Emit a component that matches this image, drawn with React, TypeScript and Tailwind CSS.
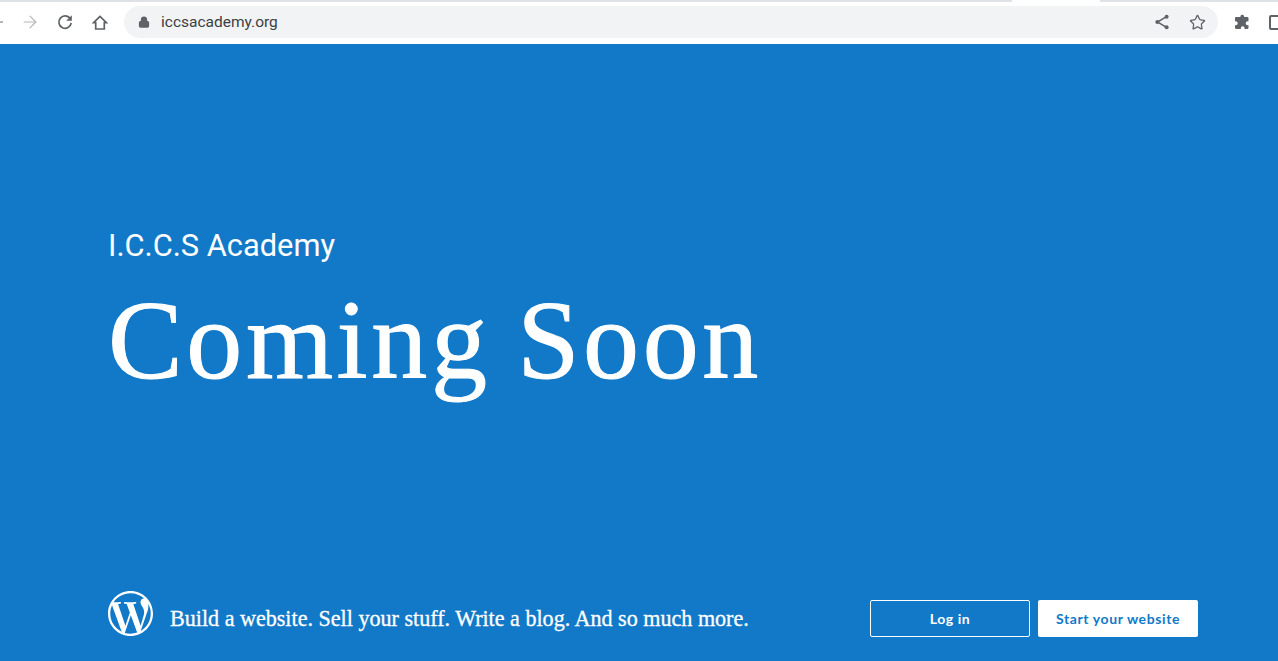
import { ArrowRight, Lock, Star } from "lucide-react";
import { SiWordpress } from "react-icons/si";

const Gray = "#5f6368";

function ShareIcon() {
  return (
    <svg width="16" height="16" viewBox="0 0 16 16" fill="none" stroke={Gray} strokeWidth="1.5">
      <path d="M12.5 2.6 3.5 8l9 5.4" />
      <circle cx="12.6" cy="2.8" r="2" fill={Gray} stroke="none" />
      <circle cx="3.3" cy="8" r="2" fill={Gray} stroke="none" />
      <circle cx="12.6" cy="13.2" r="2" fill={Gray} stroke="none" />
    </svg>
  );
}

function ReloadIcon() {
  return (
    <svg width="16" height="16" viewBox="0 0 16 16" fill="none">
      <path d="M13.2 4.6A6.2 6.2 0 1 0 14.2 9" stroke={Gray} strokeWidth="1.7" />
      <path d="M14.8 1.2v5.6H9.2z" fill={Gray} />
    </svg>
  );
}

function HomeIcon() {
  return (
    <svg width="16" height="15" viewBox="0 0 16 15" fill="none" stroke={Gray} strokeWidth="1.7">
      <path d="M8 1.4 1.6 7.6h2.1v6.4h8.6V7.6h2.1z" strokeLinejoin="miter" />
    </svg>
  );
}

function PuzzleIcon() {
  return (
    <svg width="16" height="16" viewBox="0 0 16 16" fill={Gray}>
      <path d="M6.4 2.2a1.9 1.9 0 0 1 3.7 0V3h3.2c.7 0 1.2.5 1.2 1.2v3h-.8a2 2 0 0 0 0 4h.8v2.6c0 .7-.5 1.2-1.2 1.2h-2.7v-.8a1.9 1.9 0 0 0-3.8 0v.8H2.2c-.7 0-1.2-.5-1.2-1.2v-2.6h.7a2 2 0 0 0 0-4H1v-3C1 3.500 1.500 3 2.200 3h4.200z" />
    </svg>
  );
}

function Toolbar() {
  return (
    <header className="h-[44px] shrink-0 bg-white flex flex-col overflow-hidden">
      {/* tab strip */}
      <div className="h-[2px] shrink-0 flex">
        <div className="w-[1012px] bg-[#dee1e6]" />
        <div className="w-[88px] bg-white" />
        <div className="flex-1 bg-[#dee1e6]" />
      </div>
      <div className="flex-1 flex items-center pb-[2px]">
        <div className="w-[3px] h-[1.5px] bg-[#b4b6b9] shrink-0" />
        <ArrowRight size={20} strokeWidth={1.4} className="text-[#b4b6b9] ml-[17px] shrink-0" />
        <div className="ml-[17px] shrink-0"><ReloadIcon /></div>
        <div className="ml-[19px] shrink-0"><HomeIcon /></div>
        <div className="ml-[16px] w-[1094px] h-[32px] shrink-0 rounded-full bg-[#f1f3f4] flex items-center pl-[14px] pr-[12px]">
          <Lock size={12} strokeWidth={2.5} fill={Gray} className="text-[#5f6368]" />
          <span className="ml-[11px] pt-[1px] text-[15.500px] text-[#3c4043] font-['Roboto',sans-serif]">iccsacademy.org</span>
          <div className="ml-auto flex items-center gap-[19px]">
            <ShareIcon />
            <Star size={17} strokeWidth={1.8} className="text-[#5f6368]" />
          </div>
        </div>
        <div className="ml-[16px] shrink-0"><PuzzleIcon /></div>
        <div className="ml-[19px] w-[14px] h-[15px] shrink-0 border-2 border-[#5f6368] rounded-[2px]" />
      </div>
    </header>
  );
}

export default function App() {
  return (
    <div className="h-[661px] w-[1278px] overflow-hidden flex flex-col bg-[#1279c9]">
      <Toolbar />
      <main className="flex-1 flex flex-col pl-[108px] pr-[80px] text-white">
        <h2 className="mt-[183px] text-[30.800px] leading-[38px] font-['Roboto',sans-serif]">I.C.C.S Academy</h2>
        <h1 className="mt-[17px] text-[112px] leading-[116px] tracking-[3.600px] [word-spacing:-5px] [-webkit-text-stroke:1px_white] font-['Liberation_Serif',serif]">Coming Soon</h1>
        <footer className="mt-auto mb-[24px] flex items-end">
          <SiWordpress size={45} className="shrink-0 mb-[1px]" />
          <p className="ml-[17px] mb-[2px] text-[22.100px] [-webkit-text-stroke:0.3px_white] font-['Liberation_Serif',serif]">
            Build a website. Sell your stuff. Write a blog. And so much more.
          </p>
          <div className="ml-auto flex gap-[8px] font-['Lato',sans-serif] text-[14px] font-bold tracking-[0.6px]">
            <a className="w-[160px] h-[37px] pb-[1px] flex items-center justify-center rounded-[2px] border border-white">Log in</a>
            <a className="w-[160px] h-[37px] pb-[1px] flex items-center justify-center rounded-[2px] bg-white text-[#1279c9]">Start your website</a>
          </div>
        </footer>
      </main>
    </div>
  );
}
